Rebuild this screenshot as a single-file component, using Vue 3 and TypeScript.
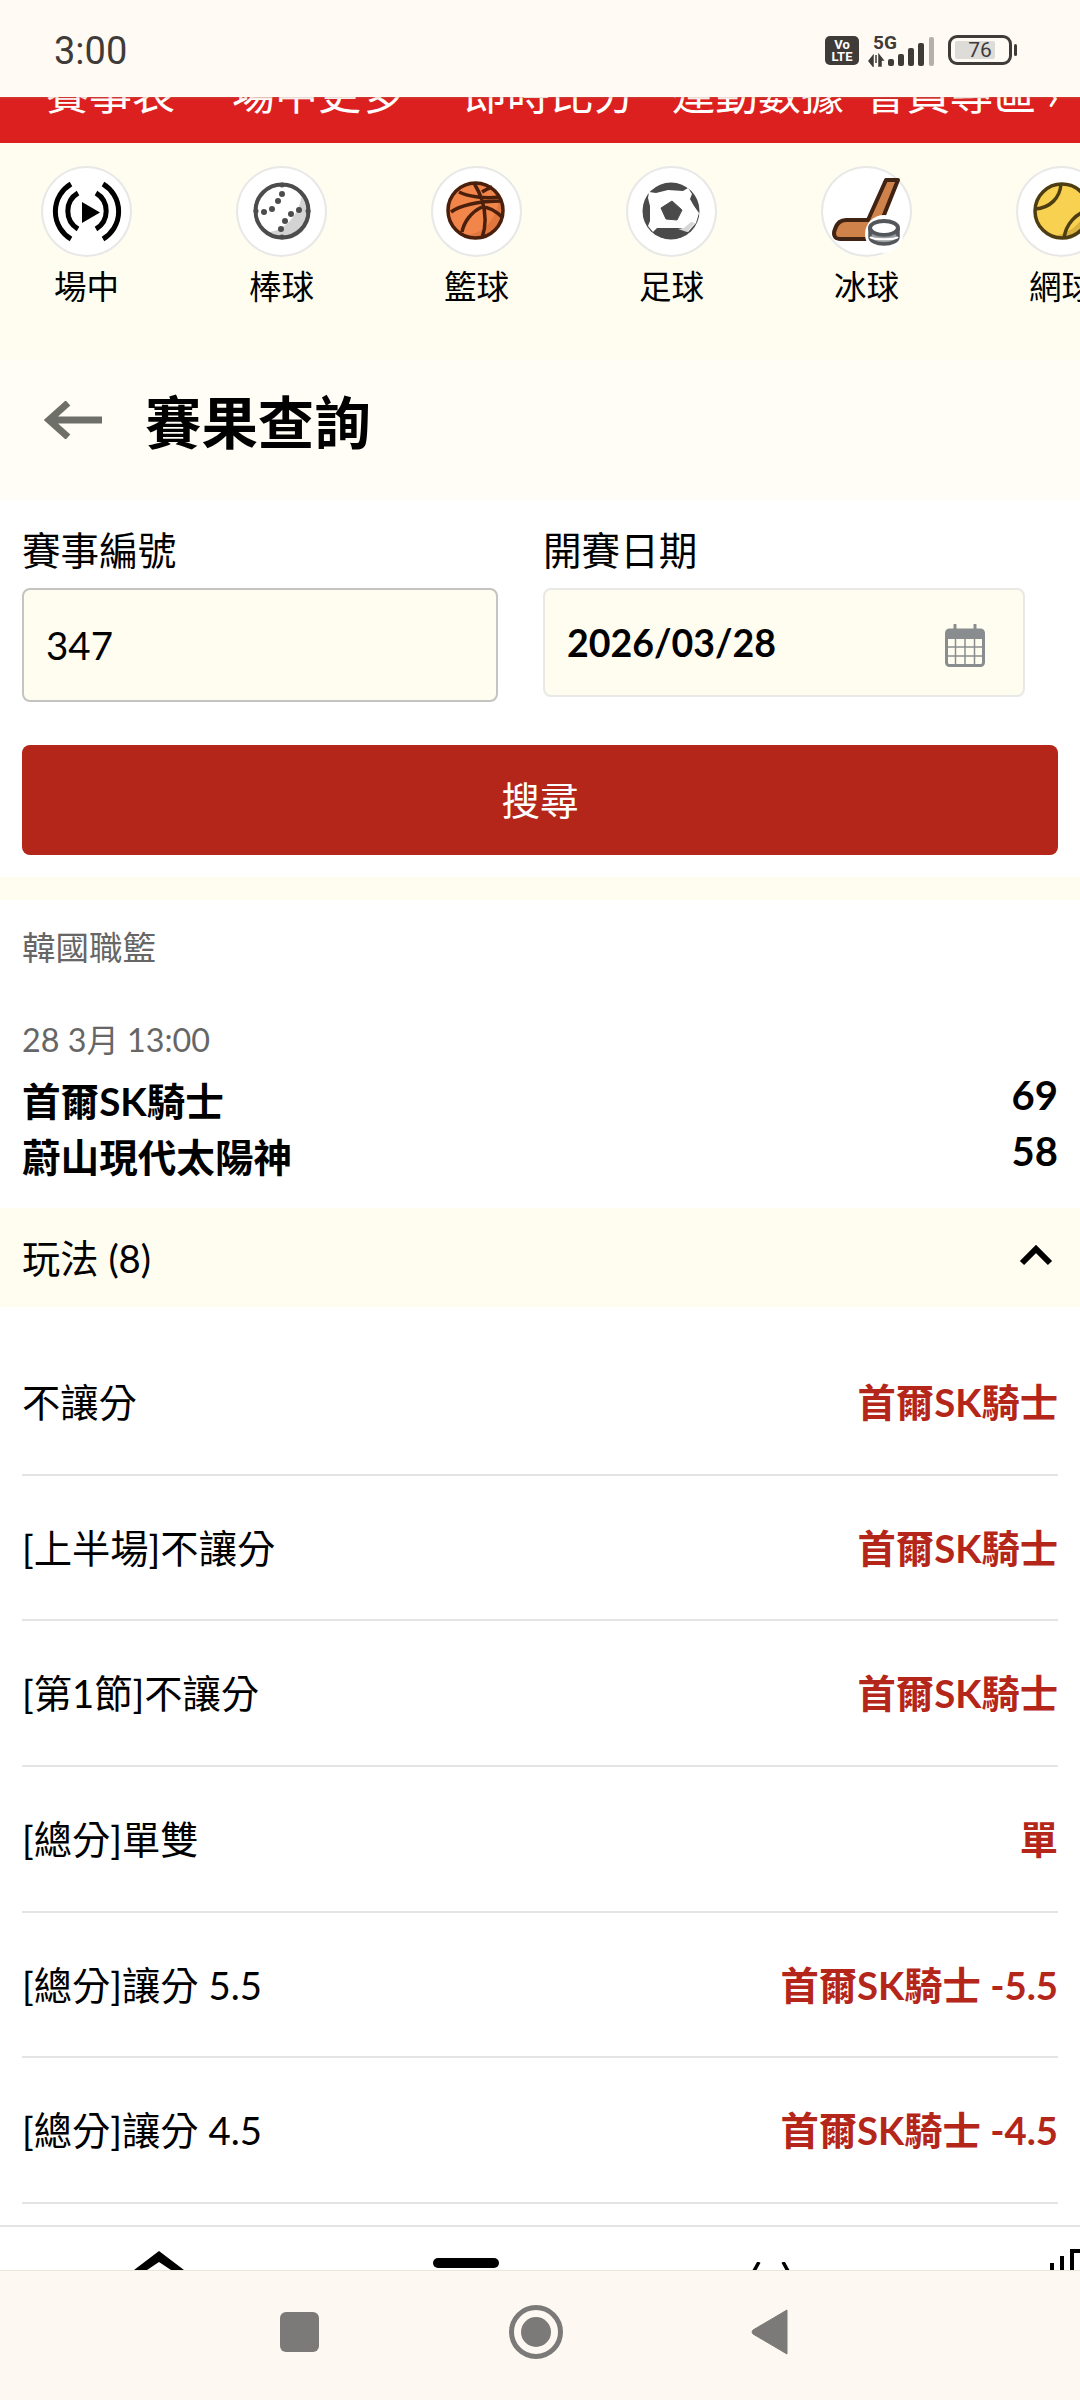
<template>
  <div class="page">
    <header class="status">
      <span class="status__time">3:00</span>
      <div class="status__icons">
        <svg class="status__volte" width="34" height="29" viewBox="0 0 34 29">
          <rect width="34" height="29" rx="5" fill="#3f3b39" />
          <text x="17" y="13" text-anchor="middle" class="status__chip">Vo</text>
          <text x="17" y="25" text-anchor="middle" class="status__chip">LTE</text>
        </svg>
        <svg class="status__signal" width="66" height="32" viewBox="0 0 66 32">
          <text x="5" y="14" class="status__five">5G</text>
          <path d="M5 21v10l-4-5zM8 20v8M11 20l4 5h-2v6h-2z" fill="#3f3b39" stroke="#3f3b39" stroke-width="1.500" />
          <rect x="20" y="24" width="6" height="7" rx="2" fill="#3f3b39" />
          <rect x="30" y="19" width="6" height="12" rx="2" fill="#3f3b39" />
          <rect x="40" y="13" width="6" height="18" rx="2" fill="#3f3b39" />
          <rect x="50" y="8" width="6" height="23" rx="2" fill="#3f3b39" />
          <rect x="61" y="2" width="5" height="29" rx="2" fill="#b4b1ad" />
        </svg>
        <div class="battery">
          <div class="battery__case">
            <div class="battery__fill"></div>
            <span class="battery__level">76</span>
          </div>
          <div class="battery__tip"></div>
        </div>
      </div>
    </header>

    <div class="ticker">
      <div class="ticker__inner">
        <span
          v-for="item in tickerItems"
          :key="item.label"
          :style="{ marginLeft: item.gap + 'px' }"
        >{{ item.label }}</span>
      </div>
    </div>

    <nav class="sports">
      <div v-for="sport in sports" :key="sport.key" class="sport">
        <div class="sport__circle">
          <svg width="91" height="91" viewBox="0 0 91 91" fill="none">
            <g v-if="sport.key === 'live'" stroke="#000" stroke-width="5" stroke-linecap="butt">
              <path d="M30 18A32 32 0 0 0 30 73" />
              <path d="M62 18A32 32 0 0 1 62 73" />
              <path d="M37 27A21 21 0 0 0 37 63" />
              <path d="M55 27A21 21 0 0 1 55 63" />
              <path d="M41 36L59 46.500L41 57Z" fill="#000" stroke="none" />
            </g>
            <g v-else-if="sport.key === 'baseball'">
              <circle cx="46" cy="45" r="27" fill="#fff" />
              <path d="M66 27A27 27 0 0 1 28 66C46 68 64 50 66 27Z" fill="#d3d3d3" />
              <circle cx="46" cy="45" r="26.500" stroke="#4c4c4c" stroke-width="4" />
              <g fill="#4c4c4c">
                <circle cx="46" cy="28" r="3" />
                <circle cx="42" cy="35" r="3" />
                <circle cx="36" cy="43" r="3" />
                <circle cx="28" cy="46" r="3" />
                <circle cx="63" cy="44" r="3" />
                <circle cx="55" cy="48" r="3" />
                <circle cx="49" cy="55" r="3" />
                <circle cx="45" cy="63" r="3" />
                <circle cx="46" cy="19" r="2.500" />
                <circle cx="46" cy="71" r="2.500" />
                <circle cx="20" cy="45" r="2.500" />
                <circle cx="72" cy="45" r="2.500" />
              </g>
            </g>
            <g v-else-if="sport.key === 'basketball'">
              <circle cx="44.500" cy="44.500" r="27.500" fill="#f2864a" />
              <path d="M68 32A27.500 27.500 0 0 1 33 69C48 70 66 56 68 32Z" fill="#d8703a" opacity="0.7" />
              <g stroke="#4a1f0c" stroke-width="3.500">
                <circle cx="44.500" cy="44.500" r="27.500" />
                <path d="M28 26C36 30 52 33 68 31" />
                <path d="M43 17C46 22 49 28 51 34" />
                <path d="M51 26C54 24 58 22 61 21" />
                <path d="M20 46C28 40 46 35 71 35" />
                <path d="M51 34C54 44 56 58 51 72" />
                <path d="M31 66C33 56 40 46 51 41" />
                <path d="M51 41C58 41 66 46 72 52" />
              </g>
            </g>
            <g v-else-if="sport.key === 'soccer'">
              <circle cx="45" cy="45" r="28.500" fill="#4a4a4a" />
              <path d="M23 26L30 27L42 24L57 25L62 22L66 28L64 33L68 40L73 47L70 57L62 66L55 62L42 62L31 62L27 66L22 60L24 55L24 40L22 32Z" fill="#fff" />
              <path d="M52 63L61 66L69 57L65 56L58 62Z" fill="#d6d6d6" />
              <path d="M46 35L56 44L51 54L40 53L35 42Z" fill="#4a4a4a" stroke="#4a4a4a" stroke-width="1" stroke-linejoin="round" />
            </g>
            <g v-else-if="sport.key === 'hockey'">
              <path
                d="M65 14H77L61 54C59 70 50 73 46 73H19C13 73 12 68 14 63C16 57 20 54 25 54H47Z"
                fill="#cf8249"
                stroke="#402312"
                stroke-width="4"
                stroke-linejoin="round"
              />
              <circle cx="63" cy="68" r="19" fill="#fff" />
              <ellipse cx="63" cy="62" rx="14" ry="7" fill="#fff" stroke="#53575c" stroke-width="4" />
              <path d="M49 62V71C49 75 55 78 63 78S77 75 77 71V62C77 66 71 69 63 69S49 66 49 62Z" fill="#9a9da1" stroke="#53575c" stroke-width="3.500" />
              <path d="M49 71C52 74 74 74 77 71" stroke="#fff" stroke-width="2" />
            </g>
            <g v-else>
              <circle cx="46" cy="45" r="27" fill="#f8d150" />
              <path d="M34 70A27 27 0 0 0 72 38C70 55 52 70 34 70Z" fill="#d9b23f" />
              <g stroke="#4d3d12" stroke-width="3.500">
                <circle cx="46" cy="45" r="27" />
                <path d="M45 18C44 32 34 42 19 43" />
                <path d="M73 44C60 47 50 58 48 72" />
              </g>
            </g>
          </svg>
        </div>
        <span class="sport__label">{{ sport.label }}</span>
      </div>
    </nav>

    <div class="title-bar">
      <svg class="title-bar__back" width="58" height="38" viewBox="0 0 58 38" fill="none">
        <path d="M24 2L5 19L24 36M5 19H58" stroke="#6f6f6a" stroke-width="7" />
      </svg>
      <h1 class="title-bar__title">賽果查詢</h1>
    </div>

    <section class="search">
      <div class="search__fields">
        <div class="field field--id">
          <label class="field__label">賽事編號</label>
          <div class="field__box field__box--id">347</div>
        </div>
        <div class="field field--date">
          <label class="field__label">開賽日期</label>
          <div class="field__box field__box--date">
            <span>2026/03/28</span>
            <svg class="field__calendar" width="40" height="43" viewBox="0 0 40 43" fill="none">
              <rect x="1.500" y="6" width="37" height="35.500" rx="3" stroke="#8a8d8f" stroke-width="3" />
              <path d="M1.500 8a3 3 0 0 1 3-3h31a3 3 0 0 1 3 3v7h-37z" fill="#8a8d8f" />
              <path d="M10 1v8M30 1v8" stroke="#8a8d8f" stroke-width="3" stroke-linecap="round" />
              <path d="M2 23H38M2 32H38M10.500 15V41M20 15V41M29.500 15V41" stroke="#8a8d8f" stroke-width="1.500" />
            </svg>
          </div>
        </div>
      </div>
      <button class="search__submit" type="button">搜尋</button>
    </section>

    <div class="band"></div>

    <section class="match">
      <div class="match__league">韓國職籃</div>
      <div class="match__time">28 3月 13:00</div>
      <div class="match__teams">
        <div v-for="team in teams" :key="team.name" class="match__team">
          <span class="match__name">{{ team.name }}</span>
          <span class="match__score">{{ team.score }}</span>
        </div>
      </div>
    </section>

    <div class="markets-head">
      <span>玩法 (8)</span>
      <svg width="34" height="22" viewBox="0 0 34 22" fill="none">
        <path d="M3 19L17 5L31 19" stroke="#000" stroke-width="6" />
      </svg>
    </div>

    <div class="markets">
      <div v-for="row in markets" :key="row.name" class="market">
        <span>{{ row.name }}</span>
        <strong class="market__result">{{ row.result }}</strong>
      </div>
    </div>

    <div class="tabbar">
      <svg class="tabbar__home" width="50" height="20" viewBox="0 0 50 20"><path d="M25 0L50 19H37L25 11L13 19H0Z" fill="#000" /></svg>
      <div class="tabbar__pill"></div>
      <svg class="tabbar__up" width="42" height="9" viewBox="0 0 42 9" fill="none"><path d="M9 0L4 9M33 0L38 9" stroke="#000" stroke-width="3.500" /></svg>
      <svg class="tabbar__chart" width="30" height="21" viewBox="0 0 30 21" fill="none"><path d="M2 21V14M12 21V7M22 21V2H30" stroke="#000" stroke-width="4" /></svg>
    </div>

    <footer class="sysnav">
      <div class="sysnav__square"></div>
      <div class="sysnav__circle"><div></div></div>
      <svg width="37" height="46" viewBox="0 0 37 46"><path d="M36 1V45L2 25Q0 23 2 21Z" fill="#7c7a78" stroke="#7c7a78" stroke-width="1" stroke-linejoin="round" /></svg>
    </footer>
  </div>
</template>

<script setup lang="ts">
interface Market {
  name: string
  result: string
}

const tickerItems = [
  { label: '賽事表', gap: 0 },
  { label: '場中更多', gap: 57 },
  { label: '即時比分', gap: 60 },
  { label: '運動數據', gap: 36 },
  { label: '會員專區 ›', gap: 20 }
]

const sports = [
  { key: 'live', label: '場中' },
  { key: 'baseball', label: '棒球' },
  { key: 'basketball', label: '籃球' },
  { key: 'soccer', label: '足球' },
  { key: 'hockey', label: '冰球' },
  { key: 'tennis', label: '網球' }
]

const teams = [
  { name: '首爾SK騎士', score: 69 },
  { name: '蔚山現代太陽神', score: 58 }
]

const markets: Market[] = [
  { name: '不讓分', result: '首爾SK騎士' },
  { name: '[上半場]不讓分', result: '首爾SK騎士' },
  { name: '[第1節]不讓分', result: '首爾SK騎士' },
  { name: '[總分]單雙', result: '單' },
  { name: '[總分]讓分 5.5', result: '首爾SK騎士 -5.5' },
  { name: '[總分]讓分 4.5', result: '首爾SK騎士 -4.5' }
]
</script>

<style>
html,
body {
  margin: 0;
  background: #fff;
}
</style>

<style scoped>
.page {
  width: 1080px;
  height: 2400px;
  display: flex;
  flex-direction: column;
  overflow: hidden;
  background: #fff;
  color: #000;
  font-family: Lato, "Noto Sans CJK TC", sans-serif;
}

.status {
  height: 97px;
  flex-shrink: 0;
  display: flex;
  justify-content: space-between;
  padding: 0 63px 0 54px;
  box-sizing: border-box;
  background: #fffaf3;
  box-shadow: 0 1px 2px rgba(180, 120, 100, 0.4);
  position: relative;
}

.status__time {
  font-family: Roboto, sans-serif;
  font-size: 38px;
  line-height: 102px;
  color: #3f3b39;
}

.status__icons {
  display: flex;
  align-items: flex-start;
  padding-top: 35px;
}

.status__volte {
  margin-top: 1px;
}

.status__chip {
  font-family: Roboto, sans-serif;
  font-size: 13px;
  font-weight: 700;
  fill: #fff;
}

.status__signal {
  margin-left: 9px;
}

.status__five {
  font-family: Roboto, sans-serif;
  font-size: 19px;
  font-weight: 700;
  fill: #3f3b39;
}

.battery {
  display: flex;
  align-items: center;
  margin-left: 14px;
}

.battery__case {
  width: 64px;
  height: 30px;
  box-sizing: border-box;
  border: 3px solid #3f3b39;
  border-radius: 9px;
  position: relative;
  display: flex;
  align-items: center;
  justify-content: center;
}

.battery__fill {
  position: absolute;
  left: 4px;
  top: 3px;
  bottom: 3px;
  width: 40px;
  background: #dedcd9;
  border-radius: 2px;
}

.battery__level {
  position: relative;
  font-family: Roboto, sans-serif;
  font-size: 21px;
  color: #3f3b39;
}

.battery__tip {
  width: 3px;
  height: 12px;
  margin-left: 2px;
  background: #3f3b39;
  border-radius: 2px;
}

.ticker {
  height: 46px;
  flex-shrink: 0;
  overflow: hidden;
  background: #dc2020;
}

.ticker__inner {
  display: flex;
  margin-top: -33px;
  padding-left: 46px;
  color: #fff;
  font-size: 43px;
  line-height: 60px;
  white-space: nowrap;
}

.sports {
  height: 217px;
  flex-shrink: 0;
  box-sizing: border-box;
  display: flex;
  gap: 104px;
  padding: 23px 0 0 41px;
  overflow: hidden;
  background: #fffdf0;
}

.sport {
  width: 91px;
  flex-shrink: 0;
  display: flex;
  flex-direction: column;
  align-items: center;
}

.sport__circle {
  width: 91px;
  height: 91px;
  box-sizing: border-box;
  border-radius: 50%;
  background: #fff;
  box-shadow: inset 0 0 0 2px #e8e8e6;
}

.sport__circle svg {
  display: block;
}

.sport__label {
  margin-top: 9px;
  font-size: 32.500px;
  line-height: 42px;
  white-space: nowrap;
}

.title-bar {
  height: 140px;
  flex-shrink: 0;
  box-sizing: border-box;
  display: flex;
  align-items: center;
  padding: 0 0 16px 44px;
  background: #fffdf5;
}

.title-bar__back {
  margin-bottom: 4px;
}

.title-bar__title {
  margin: 0 0 0 43px;
  font-size: 56.400px;
  line-height: 70px;
  font-weight: 700;
}

.search {
  height: 377px;
  flex-shrink: 0;
  box-sizing: border-box;
  padding: 25px 22px 0;
}

.search__fields {
  display: flex;
  align-items: flex-start;
  height: 220px;
}

.field--id {
  width: 476px;
}

.field--date {
  width: 482px;
  margin-left: 45px;
}

.field__label {
  display: block;
  font-size: 38.600px;
  line-height: 50px;
}

.field__box {
  box-sizing: border-box;
  margin-top: 13px;
  display: flex;
  align-items: center;
  background: #fffdf0;
  border-radius: 8px;
}

.field__box--id {
  height: 114px;
  padding-left: 22px;
  border: 2px solid #c4c4c2;
  font-size: 38.500px;
}

.field__box--date {
  height: 109px;
  justify-content: space-between;
  padding: 0 38px 0 22px;
  border: 2px solid #e8e8e4;
  font-size: 37.500px;
  font-weight: 700;
}

.field__calendar {
  margin-top: 6px;
}

.search__submit {
  display: block;
  width: 1036px;
  height: 110px;
  padding: 0 0 5px;
  border: none;
  border-radius: 8px;
  background: #b5261a;
  color: #fff;
  font-family: inherit;
  font-size: 38.600px;
}

.band {
  height: 23px;
  flex-shrink: 0;
  background: #fffdf0;
}

.match {
  height: 308px;
  flex-shrink: 0;
  box-sizing: border-box;
  padding: 25px 22px 0;
}

.match__league {
  font-size: 33.500px;
  line-height: 44px;
  color: #666;
}

.match__time {
  margin-top: 49px;
  font-size: 32.300px;
  line-height: 44px;
  color: #666;
}

.match__teams {
  margin-top: 11px;
}

.match__team {
  display: flex;
  justify-content: space-between;
  height: 56px;
  line-height: 56px;
}

.match__name {
  font-size: 38.600px;
  font-weight: 700;
}

.match__score {
  margin-top: -6px;
  font-size: 40px;
  font-weight: 700;
}

.markets-head {
  height: 99px;
  flex-shrink: 0;
  box-sizing: border-box;
  display: flex;
  justify-content: space-between;
  align-items: center;
  padding: 0 27px 3px 22px;
  background: #fffdf0;
  font-size: 38.300px;
}

.markets-head svg {
  margin-bottom: 2px;
}

.markets {
  flex: 1;
  min-height: 0;
  overflow: hidden;
  padding: 23px 22px 0;
  font-size: 38.300px;
}

.market {
  height: 145.700px;
  box-sizing: border-box;
  padding-bottom: 3px;
  display: flex;
  justify-content: space-between;
  align-items: center;
  border-bottom: 2px solid #e4e4e4;
}

.market__result {
  color: #b5261a;
  font-weight: 700;
}

.tabbar {
  height: 43px;
  flex-shrink: 0;
  position: relative;
  overflow: hidden;
  border-top: 2px solid #e4e4e4;
  background: #fff;
}

.tabbar svg,
.tabbar__pill {
  position: absolute;
}

.tabbar__home {
  left: 134px;
  top: 24px;
}

.tabbar__pill {
  left: 433px;
  top: 31px;
  width: 66px;
  height: 10px;
  border-radius: 5px;
  background: #000;
}

.tabbar__up {
  left: 750px;
  top: 35px;
}

.tabbar__chart {
  left: 1050px;
  top: 22px;
}

.sysnav {
  height: 130px;
  flex-shrink: 0;
  box-sizing: border-box;
  display: flex;
  align-items: center;
  padding: 0 0 7px 280px;
  background: #fdf9f2;
  border-top: 1px solid #ebe6dc;
}

.sysnav__square {
  width: 39px;
  height: 40px;
  border-radius: 6px;
  background: #7c7a78;
}

.sysnav__circle {
  width: 54px;
  height: 54px;
  margin: 0 188px 0 190px;
  box-sizing: border-box;
  border: 5px solid #7c7a78;
  border-radius: 50%;
  display: flex;
  align-items: center;
  justify-content: center;
}

.sysnav__circle div {
  width: 30px;
  height: 30px;
  border-radius: 50%;
  background: #7c7a78;
}
</style>
